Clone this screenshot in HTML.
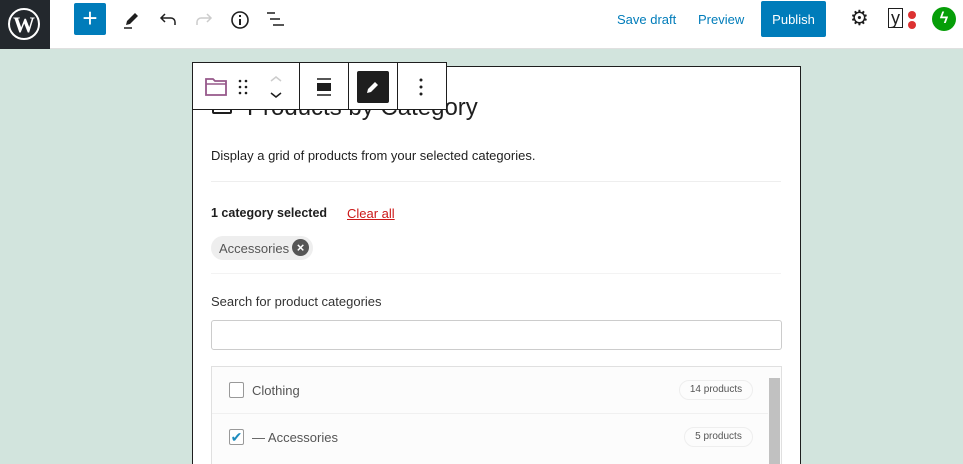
<!DOCTYPE html>
<html style="overflow:hidden"><head><style>
*{box-sizing:border-box;margin:0;padding:0}
html,body{width:963px;height:464px;overflow:hidden}
body{background:#d2e4dd;font-family:"Liberation Sans",sans-serif;position:relative}
.hdr{position:absolute;left:0;top:0;width:963px;height:49px;background:#fff;border-bottom:1px solid #e0e0e0}
.ab{position:absolute}
.blk{position:absolute;left:192px;top:66px;width:609px;height:398px;background:#fff;border:1px solid #1e1e1e;border-bottom:none}
.tb{position:absolute;left:192px;top:62px;width:255px;height:48px;background:#fff;border:1px solid #1e1e1e;display:flex}
.tb div{border-right:1px solid #1e1e1e;height:100%;position:relative}
.t{position:absolute;color:#1e1e1e;font-size:13px}
</style></head><body>
<div class="hdr"></div>
<div class="ab" style="left:0;top:0;width:50px;height:49px;background:#23282d"></div>
<svg class="ab" style="left:6px;top:6px" width="36" height="36" viewBox="0 0 36 36"><circle cx="18" cy="18" r="15" fill="none" stroke="#fff" stroke-width="2"/><text x="18" y="26" text-anchor="middle" font-family="Liberation Serif" font-weight="bold" font-size="22" fill="#fff">W</text></svg>
<div class="ab" style="left:74px;top:3px;width:32px;height:32px;background:#007cba;border-radius:2px;color:#fff;font-size:26px;line-height:30px;text-align:center">+</div>
<svg class="ab" style="left:120px;top:8px" width="24" height="24" viewBox="0 0 24 24"><path d="M6 17l1-4 8-8 3 3-8 8z" fill="#1e1e1e"/><path d="M4 20h8" stroke="#1e1e1e" stroke-width="1.5"/></svg>
<svg class="ab" style="left:156px;top:8px" width="24" height="24" viewBox="0 0 24 24"><path d="M19 17v-3a4 4 0 0 0-4-4H6M9 6l-4 4 4 4" fill="none" stroke="#1e1e1e" stroke-width="1.5"/></svg>
<svg class="ab" style="left:192px;top:8px" width="24" height="24" viewBox="0 0 24 24"><path d="M5 17v-3a4 4 0 0 1 4-4h9M15 6l4 4-4 4" fill="none" stroke="#ccc" stroke-width="1.5"/></svg>
<svg class="ab" style="left:228px;top:8px" width="24" height="24" viewBox="0 0 24 24"><circle cx="12" cy="12" r="8" fill="none" stroke="#1e1e1e" stroke-width="1.6"/><path d="M12 11v6M12 7v2" stroke="#1e1e1e" stroke-width="2"/></svg>
<svg class="ab" style="left:264px;top:8px" width="24" height="24" viewBox="0 0 24 24"><path d="M3 5h8M6 11h10M9 17h11" stroke="#1e1e1e" stroke-width="1.5"/></svg>
<div class="t" style="left:617px;top:12px;color:#007cba">Save draft</div>
<div class="t" style="left:698px;top:12px;color:#007cba">Preview</div>
<div class="ab" style="left:761px;top:1px;width:65px;height:36px;background:#007cba;border-radius:2px;color:#fff;font-size:13px;line-height:38px;text-align:center">Publish</div>
<div class="t" style="left:850px;top:6px;font-size:21px">⚙</div>
<div class="t" style="left:888px;top:8px;font-size:18px;border:1px solid #1e1e1e;padding:0 2px;line-height:18px">y</div>
<div class="ab" style="left:908px;top:11px;width:8px;height:8px;border-radius:4px;background:#dc3232"></div>
<div class="ab" style="left:908px;top:21px;width:8px;height:8px;border-radius:4px;background:#dc3232"></div>
<div class="ab" style="left:932px;top:7px;width:24px;height:24px;border-radius:12px;background:#069e08;color:#fff;font-size:16px;text-align:center;line-height:24px;font-weight:bold">ϟ</div>

<div class="blk"></div>
<div class="ab" style="left:212px;top:100px;width:20px;height:14px;border:2px solid #1e1e1e;border-radius:2px"></div>
<div class="t" style="left:247px;top:94px;font-size:24px;color:#1e1e1e">Products by Category</div>
<div class="t" style="left:211px;top:148px">Display a grid of products from your selected categories.</div>
<div class="ab" style="left:211px;top:181px;width:570px;height:1px;background:#eee"></div>
<div class="t" style="left:211px;top:206px;font-weight:bold;font-size:12.5px">1 category selected</div>
<div class="t" style="left:347px;top:206px;color:#cc1818;text-decoration:underline">Clear all</div>
<div class="ab" style="left:211px;top:236px;width:102px;height:24px;border-radius:12px;background:#eee"></div>
<div class="t" style="left:219px;top:241px;color:#555">Accessories</div>
<div class="ab" style="left:292px;top:239px;width:17px;height:17px;border-radius:9px;background:#555;color:#fff;font-size:13px;line-height:17px;text-align:center;font-weight:bold">×</div>
<div class="ab" style="left:211px;top:273px;width:570px;height:1px;background:#f3f3f3"></div>
<div class="t" style="left:211px;top:294px;color:#333">Search for product categories</div>
<div class="ab" style="left:211px;top:320px;width:571px;height:30px;border:1px solid #ccc;border-radius:3px"></div>
<div class="ab" style="left:211px;top:366px;width:571px;height:100px;border:1px solid #e0e0e0;border-bottom:none;background:#fcfcfc"></div>
<div class="ab" style="left:769px;top:378px;width:11px;height:90px;background:#c1c1c1"></div>
<div class="ab" style="left:212px;top:413px;width:556px;height:1px;background:#f0f0f0"></div>
<div class="ab" style="left:229px;top:382px;width:15px;height:16px;border:1px solid #999;border-radius:2px;background:#fff"></div>
<div class="t" style="left:252px;top:383px;color:#555">Clothing</div>
<div class="ab" style="left:679px;top:380px;width:74px;height:20px;border:1px solid #eee;border-radius:10px;font-size:10px;color:#555;text-align:center;line-height:18px">14 products</div>
<div class="ab" style="left:229px;top:429px;width:15px;height:16px;border:1px solid #999;border-radius:2px;background:#fff;color:#1e8cbe;font-size:14px;line-height:14px;text-align:center">✔</div>
<div class="t" style="left:252px;top:430px;color:#555">— Accessories</div>
<div class="ab" style="left:684px;top:427px;width:69px;height:20px;border:1px solid #eee;border-radius:10px;font-size:10px;color:#555;text-align:center;line-height:18px">5 products</div>

<div class="tb">
<div style="width:107px">
<svg class="ab" style="left:11px;top:12px" width="24" height="24" viewBox="0 0 24 24"><path d="M2 4h7l2 2h11v14H2z" fill="none" stroke="#96588a" stroke-width="1.8"/><path d="M2 9h20" stroke="#96588a" stroke-width="1.5"/></svg>
<svg class="ab" style="left:45px;top:15px" width="10" height="18" viewBox="0 0 10 18"><g fill="#1e1e1e"><circle cx="2" cy="3" r="1.3"/><circle cx="8" cy="3" r="1.3"/><circle cx="2" cy="9" r="1.3"/><circle cx="8" cy="9" r="1.3"/><circle cx="2" cy="15" r="1.3"/><circle cx="8" cy="15" r="1.3"/></g></svg>
<svg class="ab" style="left:75px;top:10px" width="16" height="28" viewBox="0 0 16 28"><path d="M3 8l5-4 5 4" fill="none" stroke="#ccc" stroke-width="1.5"/><path d="M3 20l5 4 5-4" fill="none" stroke="#1e1e1e" stroke-width="1.5"/></svg>
</div>
<div style="width:49px"><svg class="ab" style="left:14px;top:12px" width="20" height="24" viewBox="0 0 20 24"><path d="M3 4h14M3 20h14" stroke="#1e1e1e" stroke-width="1.5"/><rect x="3" y="8" width="14" height="8" fill="#1e1e1e"/></svg></div>
<div style="width:49px"><div class="ab" style="left:8px;top:8px;width:32px;height:32px;background:#1e1e1e;border-radius:2px"></div><svg class="ab" style="left:14px;top:14px" width="20" height="20" viewBox="0 0 20 20"><path d="M4 16l1-4 7-7 3 3-7 7z" fill="#fff"/></svg></div>
<div style="width:48px;border-right:none"><svg class="ab" style="left:20px;top:14px" width="6" height="20" viewBox="0 0 6 20"><g fill="#1e1e1e"><circle cx="3" cy="3" r="1.5"/><circle cx="3" cy="10" r="1.5"/><circle cx="3" cy="17" r="1.5"/></g></svg></div>
</div>
</body></html>
